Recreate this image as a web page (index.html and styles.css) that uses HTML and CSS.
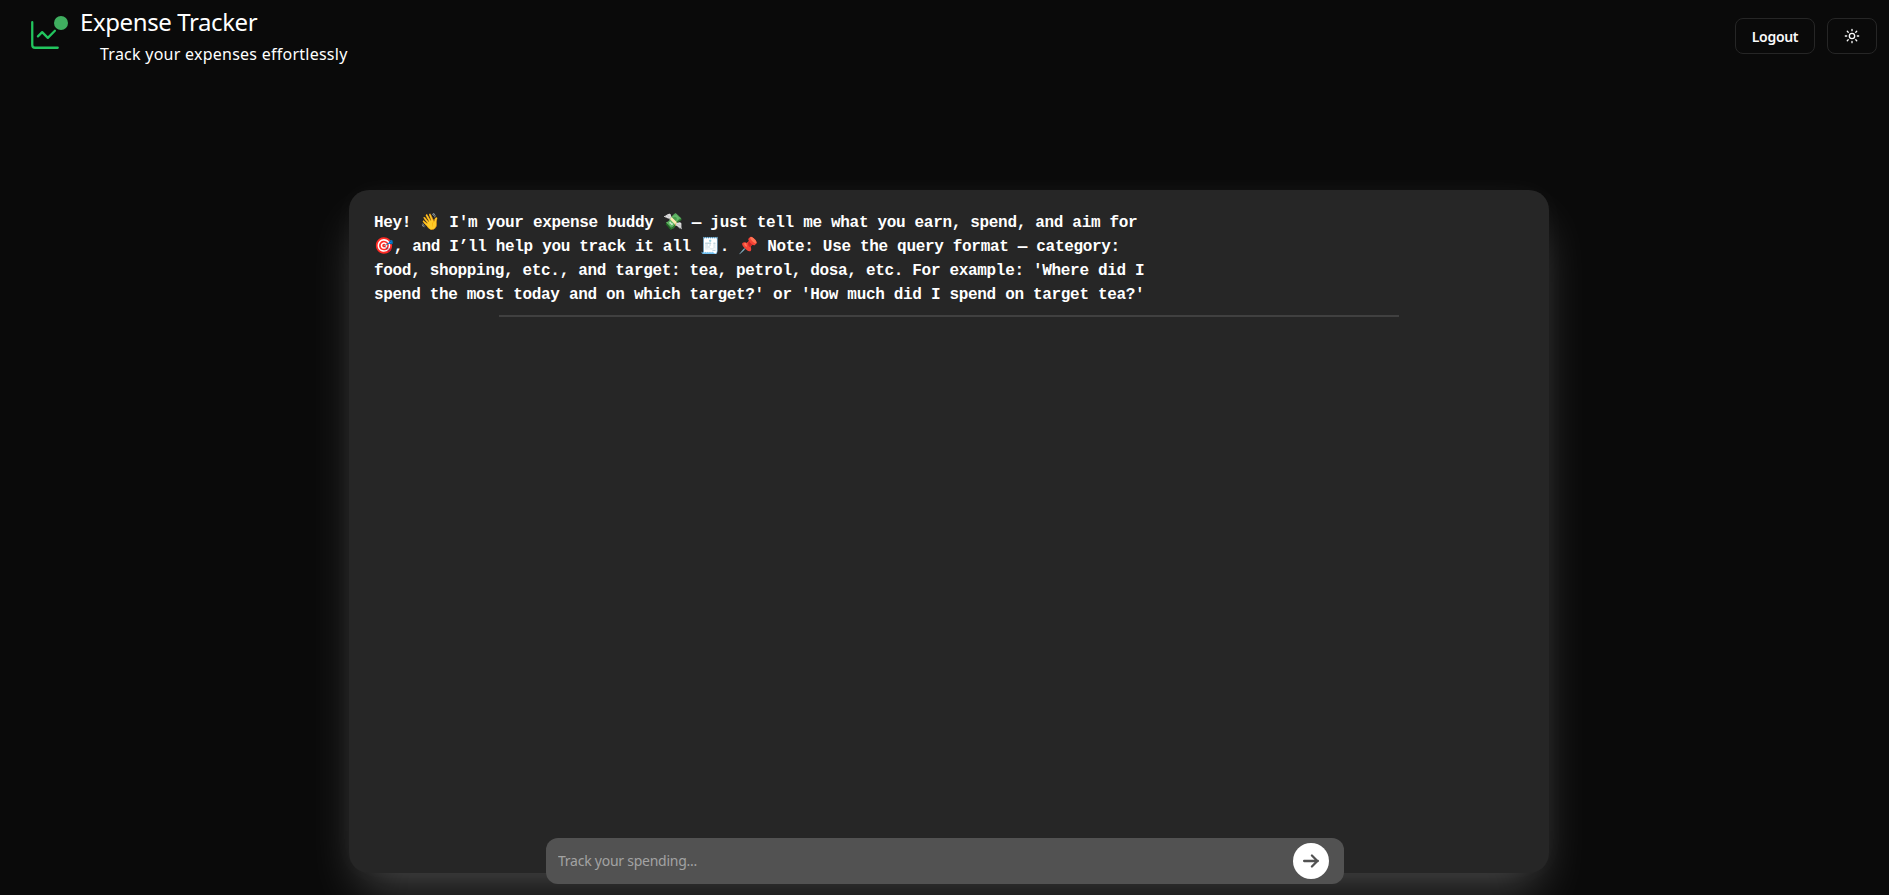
FILE: index.html
```html
<!DOCTYPE html>
<html lang="en">
<head>
<meta charset="utf-8">
<title>Expense Tracker</title>
<link rel="stylesheet" href="styles.css">
</head>
<body>
<header class="topbar">
  <div class="brand">
    <svg class="brand-icon" viewBox="0 0 24 24" fill="none" stroke="currentColor" stroke-width="1.6" stroke-linecap="round" stroke-linejoin="round">
      <path d="M3 3v16a2 2 0 0 0 2 2h16"/>
      <path d="m19 9-5 5-4-4-3 3"/>
    </svg>
    <span class="brand-dot"></span>
    <div class="brand-text">
      <h1 class="brand-title">Expense Tracker</h1>
      <p class="brand-sub">Track your expenses effortlessly</p>
    </div>
  </div>
  <div class="actions">
    <button class="btn btn-logout">Logout</button>
    <button class="btn btn-theme" aria-label="Toggle theme">
      <svg viewBox="0 0 24 24" fill="none" stroke="currentColor" stroke-width="2" stroke-linecap="round" stroke-linejoin="round">
        <circle cx="12" cy="12" r="4"/>
        <path d="M12 2v2M12 20v2M4.93 4.93l1.41 1.41M17.66 17.66l1.41 1.41M2 12h2M20 12h2M6.34 17.66l-1.41 1.41M19.07 4.93l-1.41 1.41"/>
      </svg>
    </button>
  </div>
</header>
<main class="stage">
  <section class="chat">
    <div class="message">
      <p class="message-text">Hey! 👋 I'm your expense buddy 💸 — just tell me what you earn, spend, and aim for 🎯, and I’ll help you track it all 🧾. 📌 Note: Use the query format — category: food, shopping, etc., and target: tea, petrol, dosa, etc. For example: 'Where did I spend the most today and on which target?' or 'How much did I spend on target tea?'</p>
    </div>
    <hr class="divider">
    <form class="composer">
      <input class="composer-input" type="text" placeholder="Track your spending...">
      <button class="composer-send" type="button" aria-label="Send">
        <svg viewBox="0 0 24 24" fill="none" stroke="currentColor" stroke-width="2.5" stroke-linecap="round" stroke-linejoin="round">
          <path d="M4.5 12h15M13 6l6 6-6 6"/>
        </svg>
      </button>
    </form>
  </section>
</main>
</body>
</html>
```
FILE: styles.css
```css
* { box-sizing: border-box; }
html, body { height: 100%; }
body {
  margin: 0;
  background: #0a0a0a;
  color: #fafafa;
  font-family: "Noto Sans", "Open Sans", sans-serif;
  overflow: hidden;
  display: flex;
  flex-direction: column;
}
.topbar {
  display: flex;
  justify-content: space-between;
  align-items: flex-start;
  padding: 0 12px 0 28px;
  height: 190px;
  flex: none;
}
.brand { display: flex; position: relative; align-items: flex-start; }
.brand-icon {
  width: 34px;
  height: 34px;
  color: #22c55e;
  margin-top: 18px;
  flex: none;
}
.brand-dot {
  position: absolute;
  left: 26px;
  top: 16px;
  width: 14px;
  height: 14px;
  border-radius: 50%;
  background: #3fae5f;
}
.brand-text { margin-left: 18px; padding-top: 6px; }
.brand-title {
  margin: 0;
  font-size: 24px;
  line-height: 32px;
  font-weight: 400;
  letter-spacing: -0.4px;
  color: #fff;
}
.brand-sub {
  margin: 4px 0 0 20px;
  font-size: 16px;
  line-height: 24px;
  letter-spacing: 0.25px;
  color: #fff;
}
.actions { display: flex; gap: 12px; padding-top: 18px; }
.btn {
  height: 36px;
  background: #0a0a0a;
  border: 1px solid #262626;
  border-radius: 8px;
  color: #fafafa;
  font-family: inherit;
  display: flex;
  align-items: center;
  justify-content: center;
  padding: 0;
}
.btn-logout { width: 80px; font-size: 14px; font-weight: 600; letter-spacing: -0.3px; }
.btn-theme { width: 50px; }
.btn-theme svg { width: 16px; height: 16px; }
.stage { display: flex; justify-content: center; flex: 1; padding-left: 9px; }
.chat {
  position: relative;
  width: 1200px;
  height: 683px;
  background: #262626;
  border-radius: 20px;
  padding: 21px 25px;
  box-shadow: 0 25px 50px -12px rgba(255, 255, 255, 0.25), 0 0 30px rgba(255, 255, 255, 0.03);
}
.message-text {
  margin: 0;
  width: 780px;
  font-family: "Liberation Mono", monospace;
  font-weight: 700;
  font-size: 16px;
  letter-spacing: -0.02em;
  line-height: 24px;
  color: #fff;
}
.divider {
  width: 900px;
  height: 2px;
  margin: 8px auto 0;
  border: 0;
  background: #404040;
}
.composer {
  position: absolute;
  left: 197px;
  top: 648px;
  width: 798px;
  height: 46px;
  background: #525252;
  border-radius: 12px;
  display: flex;
  align-items: center;
  padding: 0 15px 0 12px;
}
.composer-input {
  flex: 1;
  background: transparent;
  border: 0;
  outline: 0;
  font-family: inherit;
  font-size: 14px;
  letter-spacing: -0.25px;
  color: #fff;
  padding: 0 0 2px;
}
.composer-input::placeholder { color: #a3a3a3; opacity: 1; }
.composer-send {
  width: 36px;
  height: 36px;
  border: 0;
  border-radius: 50%;
  background: #fff;
  color: #525252;
  padding: 0;
  display: flex;
  align-items: center;
  justify-content: center;
}
.composer-send svg { width: 22px; height: 22px; }
```
